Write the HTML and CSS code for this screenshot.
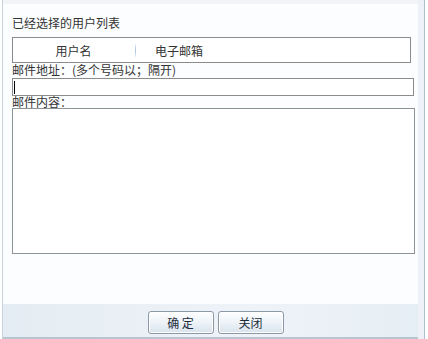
FILE: index.html
```html
<!DOCTYPE html>
<html>
<head>
<meta charset="utf-8">
<link rel="stylesheet" href="styles.css">
</head>
<body>
<div class="dialog">
  <div class="main">
    <div class="topband"></div>
    <div class="content">
      <div class="title">已经选择的用户列表</div>
      <div class="userlist">
        <div class="col col-name">用户名</div>
        <div class="sep"></div>
        <div class="col col-mail">电子邮箱</div>
      </div>
      <div class="label label-addr">邮件地址：(多个号码以；隔开)</div>
      <div class="input"><span class="caret"></span></div>
      <div class="label label-body">邮件内容：</div>
      <div class="textarea"></div>
    </div>
    <div class="footer">
      <button class="btn">确 定</button>
      <button class="btn">关闭</button>
    </div>
  </div>
  <div class="rightbar"></div>
</div>
</body>
</html>
```
FILE: styles.css
```css
html, body {
  margin: 0;
  padding: 0;
  background: #ffffff;
}
body {
  font-family: "Noto Sans CJK SC", "Liberation Sans", sans-serif;
  font-size: 12px;
  color: #333;
}
.dialog {
  width: 428px;
  height: 339px;
  display: flex;
  box-sizing: border-box;
}
.main {
  flex: 1;
  display: flex;
  flex-direction: column;
  border-left: 1px solid #c9d3de;
  margin-left: 2px;
  background: #fcfdfe;
}
.topband {
  height: 4px;
  background: #f2f4f8;
}
.content {
  flex: 1;
  padding: 11px 0 0 9px;
}
.title {
  height: 15px;
  line-height: 15px;
  margin-bottom: 7px;
}
.userlist {
  width: 397px;
  height: 24px;
  border: 1px solid #8c8c8c;
  background: #fff;
  display: flex;
  align-items: center;
}
.col {
  line-height: 15px;
}
.col-name {
  width: 121px;
  text-align: center;
}
.sep {
  width: 1px;
  height: 13px;
  background: linear-gradient(#e6eef6, #a8c0d8, #e6eef6);
  margin-left: 1px;
  margin-right: 19px;
}
.label {
  line-height: 13px;
}
.label-addr {
  height: 15px;
  line-height: 14px;
}
.label-body {
  height: 12px;
  line-height: 11px;
  margin-top: 0;
}
.input {
  width: 399px;
  height: 16px;
  border: 1px solid #8c8c8c;
  background: #fff;
  display: flex;
  align-items: center;
  padding-left: 1px;
}
.caret {
  width: 1px;
  height: 13px;
  background: #000;
}
.textarea {
  width: 401px;
  height: 144px;
  border: 1px solid #8c9498;
  background: #fff;
}
.footer {
  height: 35px;
  border-bottom: 2px solid #b8c4d0;
  background: linear-gradient(90deg, #e4ecf3 0%, #eef3f8 60%, #e6eef5 100%);
  display: flex;
  justify-content: center;
  align-items: flex-start;
  gap: 4px;
  padding-top: 7px;
  padding-left: 10px;
  box-sizing: border-box;
}
.btn {
  width: 66px;
  height: 23px;
  border: 1px solid #8a98a8;
  border-radius: 3px;
  background: linear-gradient(#fdfeff 0%, #eef3f8 50%, #d8e2ec 100%);
  font-family: "Noto Sans CJK SC", "Liberation Sans", sans-serif;
  font-size: 12px;
  color: #1c2c3c;
  padding: 0;
  margin: 0;
  box-shadow: inset 0 0 0 1px #ffffff;
}
.rightbar {
  width: 6px;
  margin-right: 3px;
  background: #eef2f8;
  border-right: 1px solid #b0c0d0;
}
```
